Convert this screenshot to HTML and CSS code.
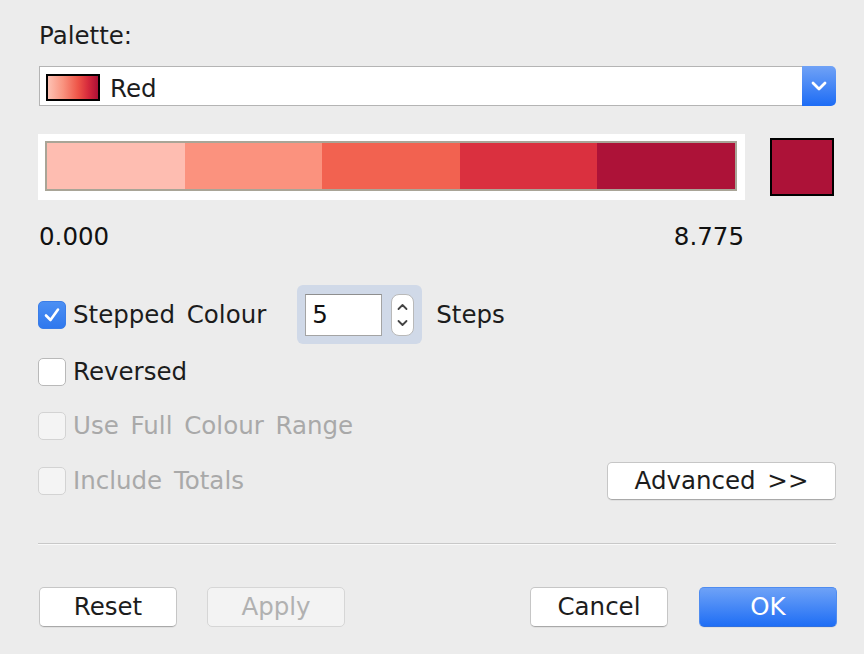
FILE: index.html
```html
<!DOCTYPE html>
<html>
<head>
<meta charset="utf-8">
<link rel="stylesheet" href="styles.css">
</head>
<body>
<div class="dialog">
  <div class="title">Palette:</div>

  <div class="dropdown">
    <div class="dd-field">
      <span class="dd-swatch"></span>
      <span class="dd-text">Red</span>
    </div>
    <div class="dd-button">
      <svg width="16" height="10" viewBox="0 0 16 10"><path d="M2 2 L8 8 L14 2" fill="none" stroke="#fff" stroke-width="2.8" stroke-linecap="round" stroke-linejoin="round"/></svg>
    </div>
  </div>

  <div class="bar-row">
    <div class="bar-frame">
      <div class="bar">
        <div class="seg s1"></div>
        <div class="seg s2"></div>
        <div class="seg s3"></div>
        <div class="seg s4"></div>
        <div class="seg s5"></div>
      </div>
    </div>
    <div class="pick"></div>
  </div>

  <div class="range">
    <span>0.000</span>
    <span>8.775</span>
  </div>

  <div class="row stepped">
    <span class="cb checked">
      <svg width="20" height="18" viewBox="0 0 20 18"><path d="M4 9.5 L8.5 14 L16 3.5" fill="none" stroke="#fff" stroke-width="2.6" stroke-linecap="round" stroke-linejoin="round"/></svg>
    </span>
    <span class="lbl">Stepped Colour</span>
    <div class="spin">
      <div class="spin-input">5</div>
      <div class="stepper">
        <svg width="23" height="42" viewBox="0 0 23 42"><path d="M7.5 15 L11.5 11 L15.5 15" fill="none" stroke="#444" stroke-width="1.8" stroke-linecap="round" stroke-linejoin="round"/><path d="M7.5 27 L11.5 31 L15.5 27" fill="none" stroke="#444" stroke-width="1.8" stroke-linecap="round" stroke-linejoin="round"/></svg>
      </div>
    </div>
    <span class="lbl steps">Steps</span>
  </div>

  <div class="row reversed">
    <span class="cb"></span>
    <span class="lbl">Reversed</span>
  </div>

  <div class="row fullrange">
    <span class="cb disabled"></span>
    <span class="lbl dis">Use Full Colour Range</span>
  </div>

  <div class="row totals">
    <span class="cb disabled"></span>
    <span class="lbl dis">Include Totals</span>
    <button class="btn advanced">Advanced &gt;&gt;</button>
  </div>

  <div class="sep"></div>

  <div class="buttons">
    <button class="btn">Reset</button>
    <button class="btn disabled-btn apply">Apply</button>
    <span class="spacer"></span>
    <button class="btn">Cancel</button>
    <button class="btn ok">OK</button>
  </div>
</div>
</body>
</html>
```
FILE: styles.css
```css
* { box-sizing: border-box; }
html, body { margin: 0; padding: 0; background: #ececec; }
body {
  font-family: "DejaVu Sans", "Liberation Sans", sans-serif;
  font-size: 24.5px;
  color: #1c1c1c;
  word-spacing: 4px;
}
.dialog {
  width: 864px;
  height: 654px;
  padding: 22px 28px 0 38px;
}
.title {
  height: 28px;
  line-height: 28px;
  margin-left: 1px;
}
.dropdown {
  margin-top: 16px;
  height: 40px;
  display: flex;
  margin-left: 1px;
}
.dd-field {
  flex: 1;
  background: #fff;
  border: 1px solid #b4b4b4;
  border-right: none;
  display: flex;
  align-items: center;
  padding: 2px 0 0 6px;
}
.dd-swatch {
  width: 54px;
  height: 27px;
  border: 2px solid #000;
  background: linear-gradient(to right, #fdc2b4 0%, #f9937f 30%, #ee5548 60%, #d62a3c 80%, #ab1036 100%);
}
.dd-text {
  margin-left: 10px;
  line-height: 28px;
  padding-top: 3px;
}
.dd-button {
  width: 34px;
  border-radius: 0 5px 5px 0;
  background: linear-gradient(to bottom, #70a2f6, #1d6cf5);
  display: flex;
  align-items: center;
  justify-content: center;
}
.bar-row {
  margin-top: 28px;
  height: 66px;
  display: flex;
  align-items: center;
}
.bar-frame {
  width: 707px;
  height: 66px;
  background: #fff;
  padding: 7px 8px 9px 7px;
}
.bar {
  height: 50px;
  border: 2px solid #a9a597;
  display: flex;
}
.seg { flex: 1; }
.s1 { background: #febdb1; }
.s2 { background: #fb927e; }
.s3 { background: #f26250; }
.s4 { background: #da303f; }
.s5 { background: #ad1238; }
.pick {
  margin-left: 25px;
  width: 64px;
  height: 58px;
  border: 2px solid #000;
  background: #ad1238;
}
.range {
  margin-top: 23px;
  width: 706px;
  height: 28px;
  line-height: 28px;
  display: flex;
  justify-content: space-between;
  color: #111;
  padding-left: 1px;
}
.row {
  display: flex;
  align-items: center;
}
.cb {
  width: 28px;
  height: 28px;
  border-radius: 5px;
  background: #fff;
  border: 1px solid #b9b9b9;
  flex: none;
  display: flex;
  align-items: center;
  justify-content: center;
}
.cb.checked {
  background: linear-gradient(to bottom, #4b8ff3, #2f78ee);
  border-color: #3a7de8;
}
.cb.disabled {
  background: #f4f4f4;
  border-color: #d3d3d3;
}
.lbl {
  margin-left: 7px;
  line-height: 28px;
  white-space: nowrap;
}
.lbl.dis { color: #a9a9a9; }
.stepped {
  margin-top: 34px;
  height: 59px;
}
.spin {
  margin-left: 31px;
  width: 125px;
  height: 59px;
  border-radius: 6px;
  background: #d0d9e8;
  display: flex;
  align-items: center;
  padding-left: 8px;
}
.spin-input {
  width: 77px;
  height: 42px;
  background: #fff;
  border: 1px solid #a4a4a4;
  border-top-color: #8e8e8e;
  line-height: 40px;
  padding-left: 6px;
  color: #111;
}
.stepper {
  margin-left: 9px;
  width: 23px;
  height: 42px;
  background: #fff;
  border: 1px solid #b9b9b9;
  border-radius: 8px;
  display: flex;
  align-items: center;
  justify-content: center;
  overflow: hidden;
}
.stepper svg { flex: none; }
.steps { margin-left: 14px; }
.reversed {
  margin-top: 14px;
  height: 28px;
}
.fullrange {
  margin-top: 26px;
  height: 28px;
}
.totals {
  margin-top: 22px;
  height: 38px;
}
.btn {
  font-family: "DejaVu Sans", "Liberation Sans", sans-serif;
  font-size: 24.5px;
  color: #1c1c1c;
  word-spacing: 4px;
  background: #fff;
  border: 1px solid #c6c6c6;
  border-bottom-color: #a9a9a9;
  border-radius: 5px;
  padding: 0;
  margin: 0;
  box-shadow: 0 1px 0 rgba(0,0,0,0.05);
}
.advanced {
  margin-left: auto;
  width: 229px;
  height: 38px;
  line-height: 36px;
}
.sep {
  margin-top: 43px;
  height: 2px;
  border-top: 1px solid #c8c8c8;
  border-bottom: 1px solid #f9f9f9;
}
.buttons {
  margin-top: 42px;
  display: flex;
  padding-left: 1px;
  margin-right: -1px;
}
.buttons .btn {
  width: 138px;
  height: 40px;
  line-height: 38px;
}
.buttons .apply { margin-left: 30px; }
.disabled-btn {
  background: #f3f3f3;
  border-color: #d6d6d6;
  color: #b1b1b1;
  box-shadow: none;
}
.spacer { flex: 1; }
.buttons .ok {
  margin-left: 31px;
  background: linear-gradient(to bottom, #6ea2f7, #1f6ef5);
  border-color: #4f8cf0;
  border-bottom-color: #2f6fe0;
  color: #fff;
}
```
